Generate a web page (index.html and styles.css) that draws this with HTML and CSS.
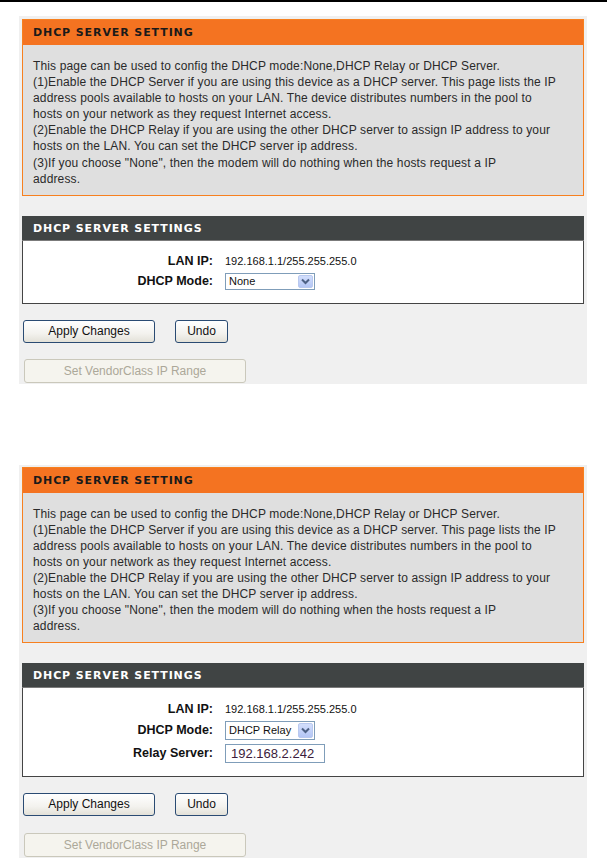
FILE: index.html
```html
<!DOCTYPE html>
<html lang="en">
<head>
<meta charset="utf-8">
<title>DHCP Server Setting</title>
<link rel="stylesheet" href="styles.css">
</head>
<body>
<div class="topline"></div>

<section class="panel panel-first">
  <div class="info">
    <div class="info-title">DHCP SERVER SETTING</div>
    <div class="info-body">This page can be used to config the DHCP mode:None,DHCP Relay or DHCP Server.<br>(1)Enable the DHCP Server if you are using this device as a DHCP server. This page lists the IP<br>address pools available to hosts on your LAN. The device distributes numbers in the pool to<br>hosts on your network as they request Internet access.<br>(2)Enable the DHCP Relay if you are using the other DHCP server to assign IP address to your<br>hosts on the LAN. You can set the DHCP server ip address.<br>(3)If you choose "None", then the modem will do nothing when the hosts request a IP<br>address.</div>
  </div>
  <div class="settings">
    <div class="settings-title">DHCP SERVER SETTINGS</div>
    <div class="settings-body">
      <span class="label">LAN IP:</span>
      <span class="value">192.168.1.1/255.255.255.0</span>
      <span class="label">DHCP Mode:</span>
      <span class="field"><span class="select"><span class="select-text">None</span><span class="select-btn"><svg width="9" height="7" viewBox="0 0 9 7"><path d="M1 1.5 L4.5 5 L8 1.5" fill="none" stroke="#4d6185" stroke-width="2"/></svg></span></span></span>
    </div>
  </div>
  <div class="actions">
    <button class="btn btn-apply">Apply Changes</button>
    <button class="btn btn-undo">Undo</button>
  </div>
  <button class="btn btn-vendor" disabled>Set VendorClass IP Range</button>
</section>

<section class="panel panel-second">
  <div class="info">
    <div class="info-title">DHCP SERVER SETTING</div>
    <div class="info-body">This page can be used to config the DHCP mode:None,DHCP Relay or DHCP Server.<br>(1)Enable the DHCP Server if you are using this device as a DHCP server. This page lists the IP<br>address pools available to hosts on your LAN. The device distributes numbers in the pool to<br>hosts on your network as they request Internet access.<br>(2)Enable the DHCP Relay if you are using the other DHCP server to assign IP address to your<br>hosts on the LAN. You can set the DHCP server ip address.<br>(3)If you choose "None", then the modem will do nothing when the hosts request a IP<br>address.</div>
  </div>
  <div class="settings">
    <div class="settings-title">DHCP SERVER SETTINGS</div>
    <div class="settings-body">
      <span class="label">LAN IP:</span>
      <span class="value">192.168.1.1/255.255.255.0</span>
      <span class="label">DHCP Mode:</span>
      <span class="field"><span class="select select-lg"><span class="select-text">DHCP Relay</span><span class="select-btn"><svg width="9" height="7" viewBox="0 0 9 7"><path d="M1 1.5 L4.5 5 L8 1.5" fill="none" stroke="#4d6185" stroke-width="2"/></svg></span></span></span>
      <span class="label">Relay Server:</span>
      <span class="field"><span class="input">192.168.2.242</span></span>
    </div>
  </div>
  <div class="actions">
    <button class="btn btn-apply">Apply Changes</button>
    <button class="btn btn-undo">Undo</button>
  </div>
  <button class="btn btn-vendor" disabled>Set VendorClass IP Range</button>
</section>
</body>
</html>
```

FILE: styles.css
```css
* { box-sizing: border-box; }

body {
  margin: 0;
  background: #ffffff;
  font-family: "Liberation Sans", Arial, sans-serif;
  font-size: 12px;
  color: #000;
}

.topline {
  height: 2px;
  background: #000;
}

.panel {
  width: 568px;
  margin-left: 19px;
  background: #f0f0f0;
  padding: 3px 3px 1px 3px;
}

.panel-first { margin-top: 14px; }
.panel-second { margin-top: 81px; padding-top: 2px; }

.info {
  border: 1px solid #f7801f;
  background: #dfdfdf;
}

.info-title {
  height: 25px;
  background: #f47321;
  color: #1a1a1a;
  font-family: "DejaVu Sans", Verdana, sans-serif;
  font-weight: bold;
  font-size: 11px;
  letter-spacing: 0.9px;
  line-height: 26px;
  padding-left: 10px;
}

.info-body {
  padding: 13px 10px 8px 10px;
  line-height: 16.1px;
  letter-spacing: 0.14px;
  white-space: nowrap;
  color: #2a2a2a;
}

.panel-second .info-body { padding-bottom: 7px; }

.settings { margin-top: 20px; }

.settings-title {
  height: 25px;
  background: #404444;
  border-bottom: 1px solid #7b7b7b;
  color: #fff;
  font-family: "DejaVu Sans", Verdana, sans-serif;
  font-weight: bold;
  font-size: 11px;
  letter-spacing: 0.9px;
  line-height: 25px;
  padding-left: 11px;
}

.settings-body {
  background: #fff;
  border: 1px solid #444;
  border-top: 0;
  padding: 12px 0 13px;
  display: grid;
  grid-template-columns: 190px 1fr;
  column-gap: 12px;
  row-gap: 4px;
  align-items: center;
}

.panel-second .settings-body { padding-top: 13px; }

.label {
  text-align: right;
  font-weight: bold;
  font-size: 12.5px;
  line-height: 16px;
  color: #111;
}

.value {
  font-size: 11px;
  line-height: 16px;
  color: #111;
}

.field { display: flex; }

.select {
  display: inline-flex;
  align-items: center;
  width: 90px;
  height: 17px;
  border: 1px solid #7f9db9;
  background: #fff;
}

.select-lg { height: 19px; }

.select-text {
  flex: 1;
  padding-left: 3px;
  font-size: 11px;
  color: #111;
}

.select-btn {
  display: flex;
  align-items: center;
  justify-content: center;
  width: 15px;
  height: 13px;
  margin-right: 1px;
  border: 1px solid #b9c9ef;
  border-radius: 2px;
  background: linear-gradient(#d2defc, #b4c6f5);
}

.select-lg .select-btn { height: 15px; }

.input {
  display: flex;
  align-items: center;
  width: 100px;
  height: 19px;
  border: 1px solid #7f9db9;
  background: #fff;
  padding-left: 5px;
  font-size: 13px;
  color: #3b1c3b;
}

.actions {
  margin-top: 16px;
  display: flex;
  gap: 20px;
  padding-left: 1px;
}

.btn {
  font-family: "Liberation Sans", Arial, sans-serif;
  font-size: 12px;
  color: #111;
  height: 23px;
  border: 1px solid #2a4b73;
  border-radius: 3px;
  background: linear-gradient(#ffffff, #f3f2ee 60%, #e3e1d8);
  padding: 0;
}

.btn-apply { width: 132px; }
.btn-undo { width: 53px; }

.btn-vendor {
  display: block;
  margin: 16px 0 0 2px;
  width: 222px;
  height: 24px;
  border-color: #cac8bb;
  background: #f5f4ee;
  color: #aca899;
}

.panel-second .btn-vendor { margin-top: 17px; }
```
